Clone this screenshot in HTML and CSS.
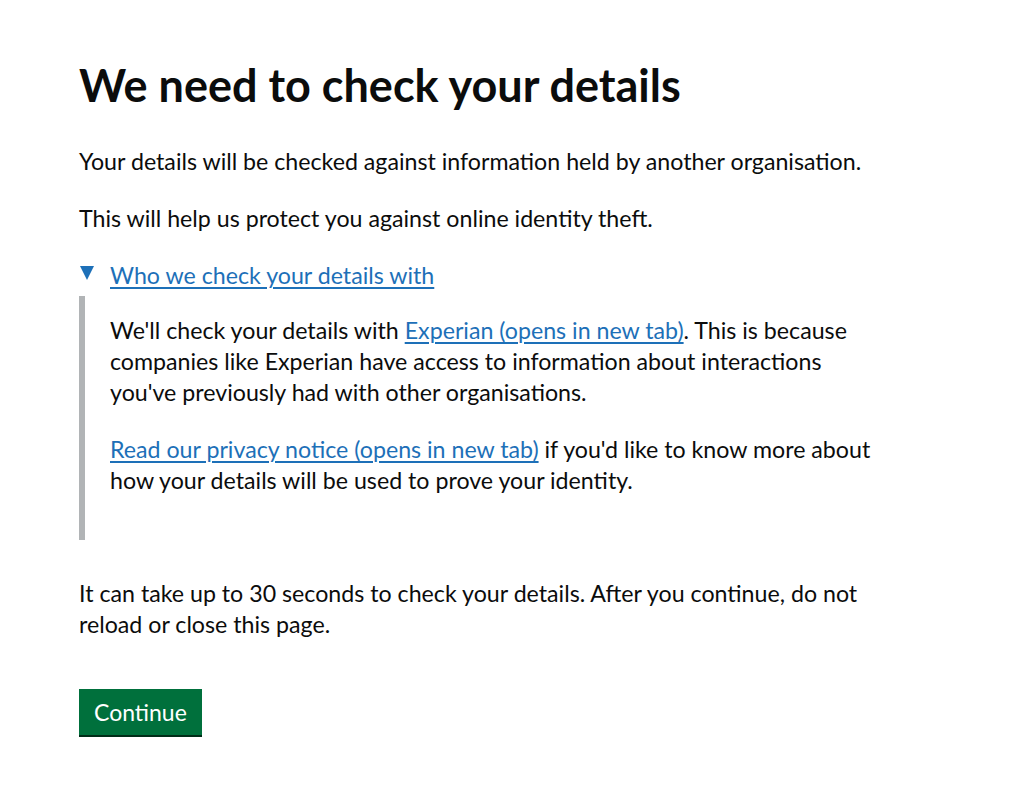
FILE: index.html
```html
<!DOCTYPE html>
<html lang="en">
<head>
<meta charset="utf-8">
<title>We need to check your details</title>
<link rel="stylesheet" href="styles.css">
</head>
<body>
<main class="main">
  <div class="column">
    <h1 class="heading">We need to check your details</h1>
    <p class="body">Your details will be checked against information held by another organisation.</p>
    <p class="body">This will help us protect you against online identity theft.</p>
    <details class="details" open>
      <summary class="details-summary"><span class="details-summary-text">Who we check your details with</span></summary>
      <div class="details-text">
        <p class="body">We'll check your details with <a class="link" href="#">Experian (opens in new tab)</a>. This is because companies like Experian have access to information about interactions you've previously had with other organisations.</p>
        <p class="body"><a class="link" href="#">Read our privacy notice (opens in new tab)</a> if you'd like to know more about how your details will be used to prove your identity.</p>
      </div>
    </details>
    <p class="body">It can take up to 30 seconds to check your details. After you continue, do not reload or close this page.</p>
    <form class="form">
      <button class="button" type="button">Continue</button>
    </form>
  </div>
</main>
</body>
</html>
```
FILE: styles.css
```css
html, body {
  margin: 0;
  padding: 0;
  background: #ffffff;
}

body {
  font-family: Lato, "Liberation Sans", Arial, sans-serif;
  color: #0b0c0c;
}

.main {
  padding: 60px 0 40px 79px;
}

.column {
  width: 806px;
}

.heading {
  font-size: 45px;
  line-height: 50px;
  font-weight: 700;
  margin: 0 0 36px;
}

.body {
  font-size: 23.2px;
  line-height: 31px;
  margin: 0 0 26px;
}

.link {
  color: #1d70b8;
  text-decoration: underline;
  text-decoration-thickness: 1.5px;
  text-underline-offset: 3px;
}

.details {
  margin: 0 0 38px;
}

.details-summary {
  position: relative;
  display: block;
  list-style: none;
  padding-left: 31px;
  margin-bottom: 5px;
  font-size: 23.2px;
  line-height: 31px;
  color: #1d70b8;
  cursor: pointer;
}

.details-summary::-webkit-details-marker {
  display: none;
}

.details-summary::before {
  content: "";
  position: absolute;
  left: 1px;
  top: 6px;
  width: 0;
  height: 0;
  border-style: solid;
  border-width: 14px 7.5px 0 7.5px;
  border-color: #1d70b8 transparent transparent transparent;
}

.details-summary-text {
  text-decoration: underline;
  text-decoration-thickness: 1.5px;
  text-underline-offset: 3px;
}

.details-text {
  border-left: 6px solid #b1b4b6;
  padding: 19px 0 18px 25px;
}

.form {
  margin-top: 49px;
}

.button {
  font-family: Lato, "Liberation Sans", Arial, sans-serif;
  font-size: 23px;
  line-height: 1;
  color: #ffffff;
  background: #00703c;
  border: 0;
  border-radius: 0;
  padding: 12px 15px 11px;
  box-shadow: 0 2px 0 #002d18;
  cursor: pointer;
}
```
